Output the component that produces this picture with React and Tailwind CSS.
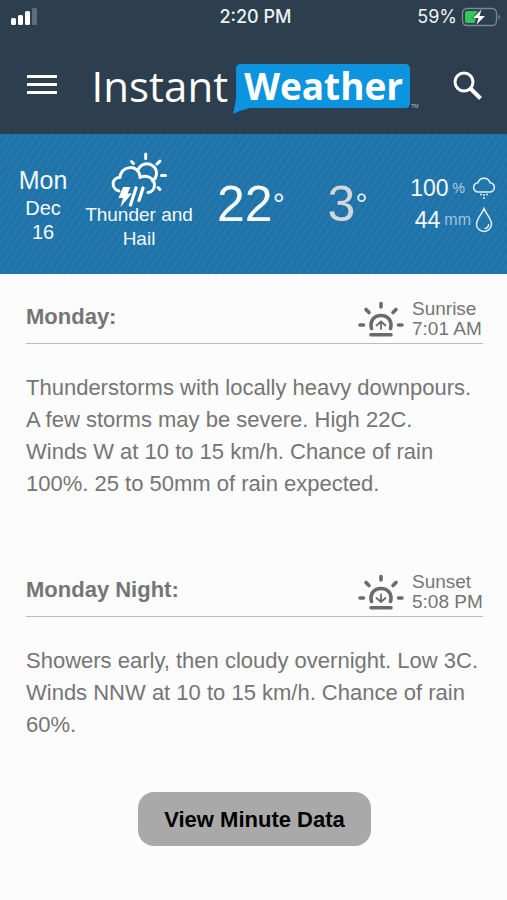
import React from 'react'

const FORECAST = [
  {
    title: 'Monday:',
    label: 'Sunrise',
    time: '7:01 AM',
    up: true,
    text: 'Thunderstorms with locally heavy downpours. A few storms may be severe. High 22C. Winds\u00a0W at 10 to 15 km/h. Chance of rain 100%. 25 to 50mm of rain expected.',
  },
  {
    title: 'Monday Night:',
    label: 'Sunset',
    time: '5:08 PM',
    up: false,
    text: 'Showers early, then cloudy overnight. Low 3C. Winds\u00a0NNW at 10 to 15 km/h. Chance of rain 60%.',
  },
]

function SignalIcon() {
  return (
    <svg width="28" height="18" viewBox="0 0 28 18" fill="#fff" aria-hidden="true">
      <rect x="1" y="10" width="5" height="7" rx="1.5" />
      <rect x="8" y="7" width="5" height="10" rx="1.5" />
      <rect x="15" y="3" width="5" height="14" rx="1.5" />
      <rect x="22" y="0" width="5" height="17" rx="1.5" opacity="0.25" />
    </svg>
  )
}

function BatteryIcon() {
  return (
    <svg width="40" height="20" viewBox="0 0 40 20" aria-hidden="true">
      <rect x="1.5" y="1.5" width="34" height="17" rx="4.5" fill="none" stroke="#7c8894" strokeWidth="1.3" />
      <path d="M37.500 7.500q1.500 .6 1.500 2.500t-1.500 2.500z" fill="#7c8894" />
      <path d="M6 4h11l-6 7.500h4L13.500 16H6q-2 0-2-2V6q0-2 2-2z" fill="#34c759" />
      <path d="M20.500 2.500 12 11h5.500L15.500 17.500 24 9h-5.500z" fill="#fff" />
    </svg>
  )
}

function StormIcon() {
  return (
    <svg width="56" height="56" viewBox="0 0 56 56" fill="none" stroke="#fff" strokeWidth="3" strokeLinecap="round" strokeLinejoin="round" aria-hidden="true">
      <path d="M34.700 3v4.500M20.500 10.500l2 2M49 10l-3 3M50.500 24.500h4M47 36.500l2 2" />
      <path d="M27.500 18a9.500 9.500 0 1 1 14 12" />
      <path d="M8 40C0 38 0 26.500 9 26.500 9.500 14 28 13 29 25.500" />
      <path d="M29 26.500c8-3.500 14.500 1.500 14.500 7.500 0 4-2.500 7-6.500 7.500" />
      <path d="M12 36h7.500l-3 6.500H21L9.500 56l2.500-9H7.500z" fill="#fff" stroke="none" />
      <path d="M25 37l-5.500 17M32 37l-4 12.500" strokeWidth="3.200" />
    </svg>
  )
}

function RainCloudIcon() {
  return (
    <svg width="22" height="24" viewBox="0 0 22 24" fill="none" stroke="#e6f1f8" strokeWidth="1.5" strokeLinecap="round" aria-hidden="true">
      <path d="M5.500 16a4.600 4.600 0 0 1-.5-9.200 6.200 6.200 0 0 1 12 0 4.600 4.600 0 0 1-.5 9.200z" />
      <path d="M8 18.500v.1M14 18.500v.1M11 19v.1M11 22v.1" strokeWidth="2" />
    </svg>
  )
}

function DropIcon() {
  return (
    <svg width="18" height="26" viewBox="0 0 18 26" fill="none" stroke="#e6f1f8" strokeWidth="1.5" strokeLinecap="round" aria-hidden="true">
      <path d="M9 1.500C7 7 1.500 11.500 1.500 17a7.500 7.500 0 0 0 15 0C16.500 11.500 11 7 9 1.500z" />
      <path d="M13.500 17.500a4 4 0 0 1-3.500 4" />
    </svg>
  )
}

function SunIcon({ up }) {
  return (
    <svg width="46" height="36" viewBox="0 0 46 36" fill="none" stroke="#6b6b6b" strokeLinecap="round" aria-hidden="true">
      <path d="M23 2.500v3.500M8 8.500l3 3M38 8.500l-3 3M2 24h3.500M40.500 24H44" strokeWidth="3.600" />
      <path d="M13.500 27.500C11.500 20 16 14.500 23 14.500S34.500 20 32.500 27.500" strokeWidth="3.600" />
      <path d="M13 33.800h20" strokeWidth="3.600" />
      <path d={up ? 'M23 28v-7M18.500 24.500l4.500-4 4.500 4' : 'M23 20.500v7M18.500 24l4.500 4 4.500-4'} strokeWidth="1.800" />
    </svg>
  )
}

function StatusBar() {
  return (
    <div className="grid grid-cols-3 items-center h-[34px] pl-2.5 pr-1.5 text-[#eef2f5] text-lg font-['Inter',sans-serif]">
      <SignalIcon />
      <span className="text-center font-medium">2:20 PM</span>
      <span className="flex items-center justify-end gap-1">
        59%
        <BatteryIcon />
      </span>
    </div>
  )
}

function Logo() {
  return (
    <a href="#" aria-label="Instant Weather" className="flex items-center pt-1 text-white font-['Open_Sans',sans-serif] leading-[46px]">
      <span className="text-[42px]">Instant</span>
      <span className="relative ml-1 pl-3 pr-2 font-bold text-[37px]">
        <svg className="absolute inset-x-0 top-0 w-full h-[52px]" viewBox="0 0 178 52" preserveAspectRatio="none" aria-hidden="true">
          <path d="M9 1H172q5 0 5 5V40q0 5-5 5H18Q9 47 1 51L4 36V6q0-5 5-5z" fill="#0d94de" />
        </svg>
        <span className="relative">Weather</span>
      </span>
      <span className="self-end text-[5px] leading-none text-[#c5ccd3]">TM</span>
    </a>
  )
}

function Header() {
  return (
    <header className="bg-[#2d3e4e]">
      <StatusBar />
      <div className="flex items-center justify-between h-[100px] pl-[27px] pr-6">
        <button aria-label="Menu" className="flex flex-col gap-[5px] w-[30px]">
          <span className="h-[3px] w-full bg-white" />
          <span className="h-[3px] w-full bg-white" />
          <span className="h-[3px] w-full bg-white" />
        </button>
        <Logo />
        <button aria-label="Search" className="pt-1">
          <svg width="30" height="30" viewBox="0 0 30 30" fill="none" stroke="#fff" aria-hidden="true">
            <circle cx="11" cy="11" r="9" strokeWidth="3" />
            <path d="M17 17l10.500 10.500" strokeWidth="4" />
          </svg>
        </button>
      </div>
    </header>
  )
}

function DaySummary() {
  return (
    <section className="flex items-center h-[140px] pl-[17px] pr-3 text-[#f4f9fc] bg-[repeating-linear-gradient(124deg,#2277ad_0px,#2277ad_3px,#1d6ea3_5px,#2277ad_6px)]">
      <div className="w-[52px] text-center text-xl leading-6">
        <div className="text-[25px] leading-8">Mon</div>
        <div>Dec</div>
        <div>16</div>
      </div>
      <div className="flex flex-col items-center w-[140px] pb-1.5 text-center text-[19px] leading-6">
        <StormIcon />
        <div className="w-[120px] -mt-1">Thunder and Hail</div>
      </div>
      <div className="flex-1 pl-2 text-[50px] leading-[50px]">22<span className="text-[30px] align-top">°</span></div>
      <div className="flex-1 pl-7 text-[50px] leading-[50px] text-[#d3d6da]">3<span className="text-[30px] align-top text-[#e6f1f8]">°</span></div>
      <div className="flex flex-col gap-1">
        <div className="flex items-center justify-end gap-1 text-[23px] leading-7">100 <span className="mr-1 text-sm text-[#b5cfe2]">%</span> <RainCloudIcon /></div>
        <div className="flex items-center justify-end gap-1 pr-0.5 text-[23px] leading-7">44 <span className="text-base text-[#9fc1da]">mm</span> <DropIcon /></div>
      </div>
    </section>
  )
}

function Period({ title, label, time, up, text }) {
  return (
    <section>
      <div className="flex items-center justify-between h-[52px] border-b border-[#bdbdbd]">
        <h2 className="pb-0.5 text-[22px] font-bold">{title}</h2>
        <div className="flex items-center gap-2 self-end pb-1 text-[19px] leading-5">
          <SunIcon up={up} />
          <div className="w-[71px]">
            <div>{label}</div>
            <div>{time}</div>
          </div>
        </div>
      </div>
      <p className="pt-7 text-[22px] leading-8">{text}</p>
    </section>
  )
}

export default function App() {
  return (
    <div className="min-h-screen bg-[#fcfcfc] text-[#757575] font-['Liberation_Sans',Arial,sans-serif]">
      <Header />
      <DaySummary />
      <main className="flex flex-col gap-[65px] pl-[26px] pr-6 pt-[18px] pb-14">
        {FORECAST.map(p => <Period key={p.title} {...p} />)}
        <button className="self-center -mt-3.5 px-[26px] h-[54px] rounded-2xl bg-[#a9a9a9] text-black text-[22px] font-bold">View Minute Data</button>
      </main>
    </div>
  )
}
